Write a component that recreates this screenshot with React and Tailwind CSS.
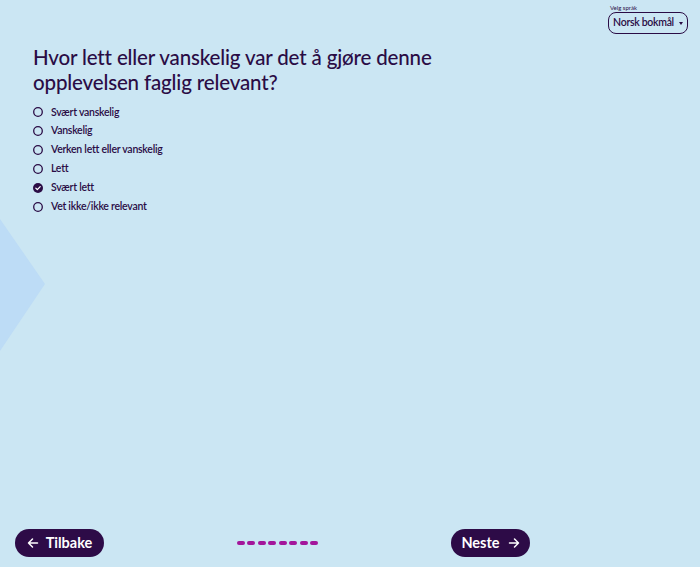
import { useState } from "react";

const options = [
  "Svært vanskelig",
  "Vanskelig",
  "Verken lett eller vanskelig",
  "Lett",
  "Svært lett",
  "Vet ikke/ikke relevant",
];

function Radio({ checked }) {
  if (checked) {
    return (
      <svg className="w-[10px] h-[10px] shrink-0" viewBox="0 0 10 10">
        <circle cx="5" cy="5" r="5" fill="#2a0c45" />
        <path d="M2.8 5.1l1.5 1.5 2.9-3" fill="none" stroke="#fff" strokeWidth="1.3" strokeLinecap="round" strokeLinejoin="round" />
      </svg>
    );
  }
  return (
    <svg className="w-[10px] h-[10px] shrink-0" viewBox="0 0 10 10">
      <circle cx="5" cy="5" r="4.3" fill="none" stroke="#2a0c45" strokeWidth="1.3" />
    </svg>
  );
}

export default function App() {
  const [selected, setSelected] = useState(4);

  return (
    <div
      className="relative min-h-screen h-[567px] overflow-hidden bg-[#cbe6f3] text-[#2a0c45] flex flex-col"
      style={{ fontFamily: 'Lato, "Noto Sans", sans-serif' }}
    >
      {/* decorative wedge on the left edge */}
      <svg className="absolute left-0 top-[219px] w-[46px] h-[132px]" viewBox="0 0 46 132">
        <polygon points="0,0 45,65 0,132" fill="#bddcf6" />
      </svg>

      {/* language picker */}
      <div className="absolute right-[12px] top-[4px] flex flex-col">
        <span className="text-[6px] leading-[8px] pl-[2px]">Velg språk</span>
        <button className="h-[22px] w-[80px] justify-center border border-[#2a0c45] rounded-[8px] flex items-center gap-[5px] text-[10.5px] tracking-[-0.3px] font-semibold">
          Norsk bokmål
          <span className="w-0 h-0 border-l-[2.5px] border-r-[2.5px] border-t-[3px] border-l-transparent border-r-transparent border-t-[#2a0c45]" />
        </button>
      </div>

      <main className="flex-1 pl-[33px] pt-[45px]">
        <h1 className="text-[20.5px] leading-[25px] tracking-[-0.15px] font-medium max-w-[420px]">
          Hvor lett eller vanskelig var det å gjøre denne opplevelsen faglig relevant?
        </h1>
        <ul className="mt-[8px] flex flex-col">
          {options.map((label, i) => (
            <li
              key={label}
              onClick={() => setSelected(i)}
              className="h-[18.9px] flex items-center gap-[8px] text-[10.5px] tracking-[-0.25px] font-semibold cursor-pointer"
            >
              <Radio checked={selected === i} />
              {label}
            </li>
          ))}
        </ul>
      </main>

      {/* bottom navigation */}
      <div className="relative w-[515px] ml-[15px] mb-[10px] flex items-center justify-between">
        <button className="h-[28px] w-[89px] justify-center rounded-full bg-[#2d0b47] text-white flex items-center gap-[7px] text-[14.5px] font-bold">
          <svg className="w-[12px] h-[12px]" viewBox="0 0 12 12" fill="none" stroke="currentColor" strokeWidth="1.5" strokeLinecap="round" strokeLinejoin="round">
            <path d="M10.5 6h-9M5.5 2L1.5 6l4 4" />
          </svg>
          Tilbake
        </button>
        <div className="flex gap-[2.5px]">
          {Array.from({ length: 8 }).map((_, i) => (
            <span key={i} className="w-[8px] h-[4px] rounded-full bg-[#a3169b]" />
          ))}
        </div>
        <button className="h-[28px] w-[79px] justify-center rounded-full bg-[#2d0b47] text-white flex items-center gap-[8px] text-[14.5px] font-bold">
          Neste
          <svg className="w-[12px] h-[12px]" viewBox="0 0 12 12" fill="none" stroke="currentColor" strokeWidth="1.5" strokeLinecap="round" strokeLinejoin="round">
            <path d="M1.5 6h9M6.5 2l4 4-4 4" />
          </svg>
        </button>
      </div>
    </div>
  );
}
